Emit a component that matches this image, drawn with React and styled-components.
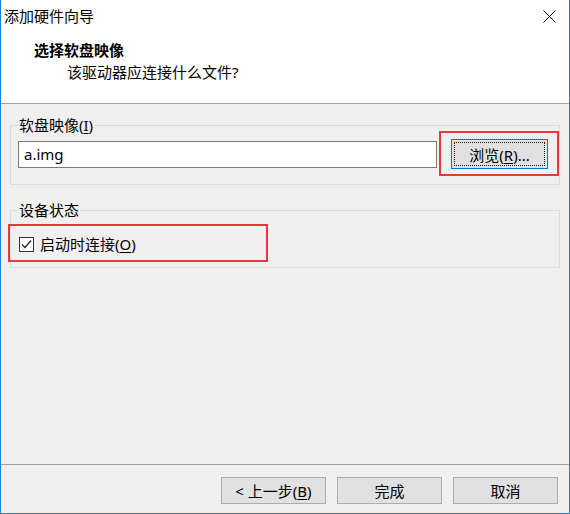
import styled, { createGlobalStyle } from "styled-components";

const Global = createGlobalStyle`
  body {
    margin: 0;
    background: #ffffff;
    font-family: "Noto Sans", "Noto Sans CJK SC", sans-serif;
    color: #000;
  }
`;

const Window = styled.div`
  position: relative;
  width: 570px;
  height: 514px;
  box-sizing: border-box;
  border: 1px solid #1883d7;
  border-top: none;
  display: flex;
  flex-direction: column;
  background: #f0f0f0;
  font-size: 15px;
`;

const TitleBar = styled.div`
  height: 32px;
  flex-shrink: 0;
  background: #fff;
  display: flex;
  align-items: center;
  justify-content: space-between;
  padding-left: 3px;
`;

const Title = styled.span`
  font-size: 15px;
  line-height: 20px;
  margin-top: -1px;
`;

const CloseBtn = styled.div`
  width: 40px;
  height: 32px;
  display: flex;
  align-items: center;
  justify-content: center;
`;

const Header = styled.div`
  height: 72px;
  flex-shrink: 0;
  box-sizing: border-box;
  background: #fff;
  border-bottom: 1px solid #a0a0a0;
  padding: 8px 0 0 33px;
`;

const HeadTitle = styled.div`
  font-weight: 700;
  font-size: 15px;
  line-height: 20px;
`;

const HeadSub = styled.div`
  font-size: 15px;
  line-height: 20px;
  margin: 2px 0 0 33px;
`;

const Body = styled.div`
  flex: 1;
  padding: 13px 9px 0 9px;
`;

const Group = styled.fieldset`
  margin: ${(p) => (p.$first ? "0" : "17px 0 0 0")};
  border: 1px solid #dcdcdc;
  padding: 0 11px ${(p) => p.$pb}px 7px;
  min-width: 0;
`;

const Legend = styled.legend`
  padding: 0 1px;
  font-size: 15px;
  line-height: 17px;
`;

const Row = styled.div`
  display: flex;
  align-items: center;
  gap: 14px;
  margin-top: ${(p) => p.$mt}px;
`;

const TextBox = styled.div`
  flex: 1;
  height: 27px;
  box-sizing: border-box;
  border: 1px solid #7a7a7a;
  background: #fff;
  padding: 0 5px;
  display: flex;
  align-items: center;
  font-size: 15px;
`;

const Button = styled.div`
  position: relative;
  width: ${(p) => p.$w}px;
  height: ${(p) => p.$h}px;
  box-sizing: border-box;
  background: #e1e1e1;
  border: 1px solid ${(p) => (p.$focused ? "#0078d7" : "#adadad")};
  display: flex;
  align-items: center;
  justify-content: center;
  font-size: 15px;

  ${(p) =>
    p.$focused &&
    `
    &::after {
      content: "";
      position: absolute;
      inset: 2px;
      border: 1px dotted #1a1a1a;
    }
  `}
`;

const Key = styled.span`
  text-decoration: underline;
  text-underline-offset: 2px;
`;

const CheckRow = styled.label`
  display: flex;
  align-items: center;
  gap: 6px;
  line-height: 17px;
  font-size: 15px;
`;

const CheckBox = styled.span`
  width: 13px;
  height: 13px;
  border: 1px solid #333;
  background: #fff;
  display: flex;
  align-items: center;
  justify-content: center;
  margin-left: 1px;
`;

const Footer = styled.div`
  height: 49px;
  flex-shrink: 0;
  box-sizing: border-box;
  border-top: 1px solid #a0a0a0;
  display: flex;
  justify-content: flex-end;
  align-items: flex-start;
  gap: 11px;
  padding: 12px 11px 0 0;
`;

const Highlight = styled.div`
  position: absolute;
  left: ${(p) => p.$x}px;
  top: ${(p) => p.$y}px;
  width: ${(p) => p.$w}px;
  height: ${(p) => p.$h}px;
  box-sizing: border-box;
  border: 2px solid #e8383d;
  pointer-events: none;
`;

export default function App() {
  return (
    <>
      <Global />
      <Window>
        <TitleBar>
          <Title>添加硬件向导</Title>
          <CloseBtn>
            <svg width="13" height="13" viewBox="0 0 13 13">
              <path d="M0.5 0.5L12.5 12.5M12.5 0.5L0.5 12.5" stroke="#000" strokeWidth="1" />
            </svg>
          </CloseBtn>
        </TitleBar>
        <Header>
          <HeadTitle>选择软盘映像</HeadTitle>
          <HeadSub>该驱动器应连接什么文件?</HeadSub>
        </Header>
        <Body>
          <Group $first $pb={15}>
            <Legend>
              软盘映像(<Key>I</Key>)
            </Legend>
            <Row $mt={5}>
              <TextBox>a.img</TextBox>
              <Button $w={97} $h={30} $focused>
                <span>
                  浏览(<Key>R</Key>)...
                </span>
              </Button>
            </Row>
          </Group>
          <Group $pb={14}>
            <Legend>设备状态</Legend>
            <Row $mt={17}>
              <CheckRow>
                <CheckBox>
                  <svg width="11" height="11" viewBox="0 0 11 11">
                    <path d="M1 5.5L4 8.5L10 1.5" fill="none" stroke="#222" strokeWidth="1.2" />
                  </svg>
                </CheckBox>
                <span>
                  启动时连接(<Key>O</Key>)
                </span>
              </CheckRow>
            </Row>
          </Group>
        </Body>
        <Footer>
          <Button $w={105} $h={27}>
            <span>
              &lt; 上一步(<Key>B</Key>)
            </span>
          </Button>
          <Button $w={105} $h={27}>完成</Button>
          <Button $w={105} $h={27}>取消</Button>
        </Footer>
        <Highlight $x={438} $y={131} $w={120} $h={45} />
        <Highlight $x={7} $y={224} $w={260} $h={38} />
      </Window>
    </>
  );
}
